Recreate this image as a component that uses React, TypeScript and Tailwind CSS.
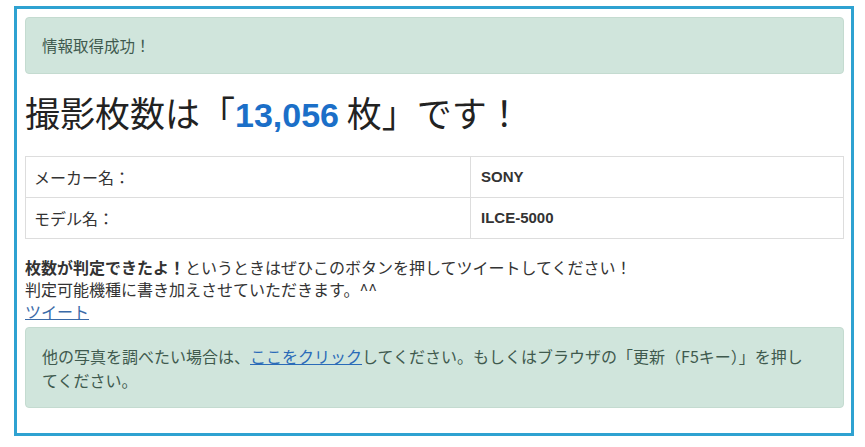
const jp = "font-['Noto_Sans_CJK_JP','Liberation_Sans',sans-serif]";

const InfoRow = ({ label, value }: { label: string; value: string }) => (
	<tr className="h-[41px]">
		<td className="w-[445px] border border-[#dddddd] px-2 align-middle">{label}</td>
		<td className="border border-[#dddddd] px-[10px] align-middle font-['Liberation_Sans',sans-serif] font-bold text-[15px]">{value}</td>
	</tr>
);

export default function App() {
	return (
		<div className={`bg-white w-[865px] h-[447px] pt-[6px] pl-[14px] text-[#333333] ${jp}`}>
			<div className="w-[840px] h-[430px] border-[3px] border-[#2fa2d1] pl-[8px] pr-[7px] pt-[8px]">
				<div className="h-[57px] flex items-center px-4 bg-[#d0e5dc] border border-[#c4dbd0] rounded text-[15.5px] text-[#3f5a4e]">
					情報取得成功！
				</div>
				<h2 className="mt-[18px] text-[35px] leading-[40px] text-[#222222]">
					撮影枚数は「
					<span className="font-['Liberation_Sans',sans-serif] font-bold text-[34px] text-[#1b6fc8]">13,056</span> 枚」です！
				</h2>
				<table className="mt-[21px] w-full border-collapse text-[16px]">
					<tbody>
						<InfoRow label="メーカー名：" value="SONY" />
						<InfoRow label="モデル名：" value="ILCE-5000" />
					</tbody>
				</table>
				<div className="mt-[17px] text-[16px] leading-[22px]">
					<p>
						<b>枚数が判定できたよ！</b>というときはぜひこのボタンを押してツイートしてください！
					</p>
					<p>判定可能機種に書き加えさせていただきます。^^</p>
					<a href="#" className="text-[#3a6aa8] underline">
						ツイート
					</a>
				</div>
				<div className="mt-[5px] h-[81px] pt-[16px] pl-4 pr-[30px] bg-[#d0e5dc] border border-[#c4dbd0] rounded text-[16px] leading-[24px] text-[#3f5a4e]">
					他の写真を調べたい場合は、
					<a href="#" className="text-[#2a6bb8] underline">
						ここをクリック
					</a>
					してください。もしくはブラウザの「更新（F5キー）」を押してください。
				</div>
			</div>
		</div>
	);
}
